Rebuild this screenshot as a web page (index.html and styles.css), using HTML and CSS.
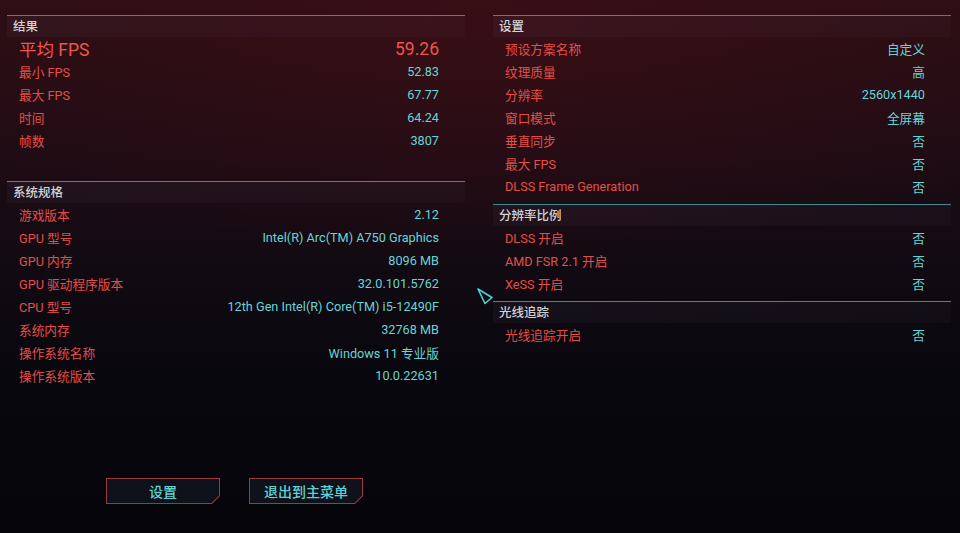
FILE: index.html
```html
<!DOCTYPE html>
<html lang="zh-CN">
<head>
<meta charset="utf-8">
<title>基准测试结果</title>
<link rel="stylesheet" href="styles.css">
</head>
<body>
<div class="screen">
  <div class="panels">
    <div class="column">
      <section class="section results">
        <div class="head">结果</div>
        <div class="row big"><span class="label">平均 FPS</span><span class="value">59.26</span></div>
        <div class="row"><span class="label">最小 FPS</span><span class="value">52.83</span></div>
        <div class="row"><span class="label">最大 FPS</span><span class="value">67.77</span></div>
        <div class="row"><span class="label">时间</span><span class="value">64.24</span></div>
        <div class="row"><span class="label">帧数</span><span class="value">3807</span></div>
      </section>
      <section class="section sub">
        <div class="head">系统规格</div>
        <div class="row"><span class="label">游戏版本</span><span class="value">2.12</span></div>
        <div class="row"><span class="label">GPU 型号</span><span class="value">Intel(R) Arc(TM) A750 Graphics</span></div>
        <div class="row"><span class="label">GPU 内存</span><span class="value">8096 MB</span></div>
        <div class="row"><span class="label">GPU 驱动程序版本</span><span class="value">32.0.101.5762</span></div>
        <div class="row"><span class="label">CPU 型号</span><span class="value">12th Gen Intel(R) Core(TM) i5-12490F</span></div>
        <div class="row"><span class="label">系统内存</span><span class="value">32768 MB</span></div>
        <div class="row"><span class="label">操作系统名称</span><span class="value">Windows 11 专业版</span></div>
        <div class="row"><span class="label">操作系统版本</span><span class="value">10.0.22631</span></div>
      </section>
    </div>
    <div class="column">
      <section class="section">
        <div class="head">设置</div>
        <div class="row"><span class="label">预设方案名称</span><span class="value">自定义</span></div>
        <div class="row"><span class="label">纹理质量</span><span class="value">高</span></div>
        <div class="row"><span class="label">分辨率</span><span class="value">2560x1440</span></div>
        <div class="row"><span class="label">窗口模式</span><span class="value">全屏幕</span></div>
        <div class="row"><span class="label">垂直同步</span><span class="value">否</span></div>
        <div class="row"><span class="label">最大 FPS</span><span class="value">否</span></div>
        <div class="row"><span class="label">DLSS Frame Generation</span><span class="value">否</span></div>
      </section>
      <section class="section sub tight">
        <div class="head">分辨率比例</div>
        <div class="row"><span class="label">DLSS 开启</span><span class="value">否</span></div>
        <div class="row"><span class="label">AMD FSR 2.1 开启</span><span class="value">否</span></div>
        <div class="row"><span class="label">XeSS 开启</span><span class="value">否</span></div>
      </section>
      <section class="section sub tight">
        <div class="head">光线追踪</div>
        <div class="row"><span class="label">光线追踪开启</span><span class="value">否</span></div>
      </section>
    </div>
  </div>
  <div class="buttons">
    <div class="btn"><div class="btn-inner">设置</div></div>
    <div class="btn"><div class="btn-inner">退出到主菜单</div></div>
  </div>
  <svg class="cursor" width="18" height="18" viewBox="0 0 18 18">
    <polygon points="2,1 16,9.5 9,15.5" fill="none" stroke="#4fd0d4" stroke-width="1.6" stroke-linejoin="round"/>
  </svg>
</div>
</body>
</html>
```
FILE: styles.css
```css
html, body {
  margin: 0;
  padding: 0;
}
body {
  width: 960px;
  height: 533px;
  overflow: hidden;
  background: #05050b;
  font-family: Roboto, "Noto Sans CJK SC", sans-serif;
}
.screen {
  position: relative;
  width: 960px;
  height: 533px;
  box-sizing: border-box;
  display: flex;
  flex-direction: column;
  background:
    radial-gradient(ellipse 700px 260px at 50% 0%, rgba(70, 14, 22, 0.55), rgba(70, 14, 22, 0) 100%),
    linear-gradient(180deg, #2a0e14 0%, #1e0c14 28%, #120a12 50%, #08070e 72%, #05050a 100%);
}
.panels {
  display: flex;
  gap: 28px;
  padding: 15px 9px 0 7px;
}
.column {
  flex: 1;
  display: flex;
  flex-direction: column;
}
.section {
  border-top: 1.5px solid #5d7c84;
}
.section.sub {
  border-top-color: #3d8b92;
}
.results {
  padding-bottom: 29px;
}
.section.tight {
  margin-top: 6px;
}
.head {
  height: 21px;
  line-height: 21px;
  padding-left: 6px;
  font-size: 12.5px;
  font-weight: 500;
  color: #d2d2d6;
  background: linear-gradient(90deg, rgba(120, 120, 150, 0.065), rgba(120, 120, 150, 0.045));
}
.row {
  height: 23px;
  display: flex;
  align-items: center;
  justify-content: space-between;
  padding: 0 26px 0 12px;
  font-size: 12.7px;
  font-weight: 400;
}
.label {
  color: #e34f48;
}
.value {
  color: #66d5d7;
}
.row.big {
  font-size: 17.5px;
}
.row.big .label,
.row.big .value {
  color: #f0544d;
}
.buttons {
  margin-top: auto;
  display: flex;
  gap: 29px;
  padding: 0 0 29px 106px;
}
.btn {
  width: 114px;
  height: 26px;
  padding: 1px;
  box-sizing: border-box;
  background: #9a3a3c;
  clip-path: polygon(0 0, 100% 0, 100% calc(100% - 8px), calc(100% - 8px) 100%, 0 100%);
}
.btn-inner {
  height: 100%;
  background: #0f111b;
  clip-path: polygon(0 0, 100% 0, 100% calc(100% - 7.5px), calc(100% - 7.5px) 100%, 0 100%);
  color: #5ed3d6;
  font-size: 14px;
  display: flex;
  align-items: center;
  justify-content: center;
  font-weight: 500;
}
.cursor {
  position: absolute;
  left: 476px;
  top: 288px;
}
```
